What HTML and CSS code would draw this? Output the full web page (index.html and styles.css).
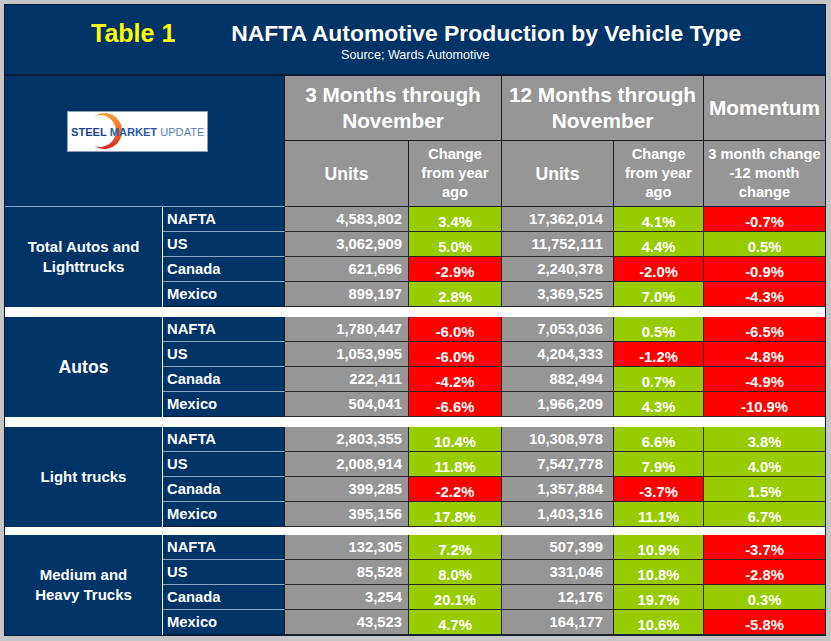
FILE: index.html
```html
<!DOCTYPE html>
<html>
<head>
<meta charset="utf-8">
<link rel="stylesheet" href="styles.css">
</head>
<body>
<div class="frame">
  <div class="titlebar">
    <div class="title-line">
      <span class="table-no">Table 1</span>
      <span class="title">NAFTA Automotive Production by Vehicle Type</span>
    </div>
    <div class="source">Source; Wards Automotive</div>
  </div>

  <div class="head">
    <div class="logo-cell">
      <div class="logo">
        <svg width="139" height="39" viewBox="0 0 139 39">
          <defs>
            <linearGradient id="arcg" x1="0" y1="0" x2="0" y2="1">
              <stop offset="0" stop-color="#f7a23a"/>
              <stop offset="0.5" stop-color="#ef6a22"/>
              <stop offset="1" stop-color="#d8261f"/>
            </linearGradient>
          </defs>
          <path d="M25.7,4.3 A18,18 0 1 1 25.7,33.7 A16,16 0 1 0 25.7,4.3 Z" fill="url(#arcg)"/>
          <text x="3" y="23.5" class="logo-text"><tspan class="l-steel">STEEL</tspan> <tspan class="l-market">MARKET</tspan> <tspan class="l-update">UPDATE</tspan></text>
        </svg>
      </div>
    </div>
    <div class="hd hd1 span2">3 Months through<br>November</div>
    <div class="hd hd1 span2">12 Months through<br>November</div>
    <div class="hd hd1 last">Momentum</div>
    <div class="hd hd2 units">Units</div>
    <div class="hd hd2 small">Change<br>from year<br>ago</div>
    <div class="hd hd2 units">Units</div>
    <div class="hd hd2 small">Change<br>from year<br>ago</div>
    <div class="hd hd2 small last">3 month change<br>-12 month<br>change</div>
  </div>

  <div class="section">
    <div class="cat">Total Autos and<br>Lighttrucks</div>
    <div class="ctry">NAFTA</div><div class="num">4,583,802</div><div class="pct g">3.4%</div><div class="num n2">17,362,014</div><div class="pct g">4.1%</div><div class="pct r last">-0.7%</div>
    <div class="ctry">US</div><div class="num">3,062,909</div><div class="pct g">5.0%</div><div class="num n2">11,752,111</div><div class="pct g">4.4%</div><div class="pct g last">0.5%</div>
    <div class="ctry">Canada</div><div class="num">621,696</div><div class="pct r">-2.9%</div><div class="num n2">2,240,378</div><div class="pct r">-2.0%</div><div class="pct r last">-0.9%</div>
    <div class="ctry end">Mexico</div><div class="num">899,197</div><div class="pct g">2.8%</div><div class="num n2">3,369,525</div><div class="pct g">7.0%</div><div class="pct r last">-4.3%</div>
  </div>
  <div class="gap"></div>

  <div class="section">
    <div class="cat big">Autos</div>
    <div class="ctry">NAFTA</div><div class="num">1,780,447</div><div class="pct r">-6.0%</div><div class="num n2">7,053,036</div><div class="pct g">0.5%</div><div class="pct r last">-6.5%</div>
    <div class="ctry">US</div><div class="num">1,053,995</div><div class="pct r">-6.0%</div><div class="num n2">4,204,333</div><div class="pct r">-1.2%</div><div class="pct r last">-4.8%</div>
    <div class="ctry">Canada</div><div class="num">222,411</div><div class="pct r">-4.2%</div><div class="num n2">882,494</div><div class="pct g">0.7%</div><div class="pct r last">-4.9%</div>
    <div class="ctry end">Mexico</div><div class="num">504,041</div><div class="pct r">-6.6%</div><div class="num n2">1,966,209</div><div class="pct g">4.3%</div><div class="pct r last">-10.9%</div>
  </div>
  <div class="gap"></div>

  <div class="section">
    <div class="cat">Light trucks</div>
    <div class="ctry">NAFTA</div><div class="num">2,803,355</div><div class="pct g">10.4%</div><div class="num n2">10,308,978</div><div class="pct g">6.6%</div><div class="pct g last">3.8%</div>
    <div class="ctry">US</div><div class="num">2,008,914</div><div class="pct g">11.8%</div><div class="num n2">7,547,778</div><div class="pct g">7.9%</div><div class="pct g last">4.0%</div>
    <div class="ctry">Canada</div><div class="num">399,285</div><div class="pct r">-2.2%</div><div class="num n2">1,357,884</div><div class="pct r">-3.7%</div><div class="pct g last">1.5%</div>
    <div class="ctry end">Mexico</div><div class="num">395,156</div><div class="pct g">17.8%</div><div class="num n2">1,403,316</div><div class="pct g">11.1%</div><div class="pct g last">6.7%</div>
  </div>
  <div class="gap short"></div>

  <div class="section">
    <div class="cat">Medium and<br>Heavy Trucks</div>
    <div class="ctry">NAFTA</div><div class="num">132,305</div><div class="pct g">7.2%</div><div class="num n2">507,399</div><div class="pct g">10.9%</div><div class="pct r last">-3.7%</div>
    <div class="ctry">US</div><div class="num">85,528</div><div class="pct g">8.0%</div><div class="num n2">331,046</div><div class="pct g">10.8%</div><div class="pct r last">-2.8%</div>
    <div class="ctry">Canada</div><div class="num">3,254</div><div class="pct g">20.1%</div><div class="num n2">12,176</div><div class="pct g">19.7%</div><div class="pct g last">0.3%</div>
    <div class="ctry end">Mexico</div><div class="num">43,523</div><div class="pct g">4.7%</div><div class="num n2">164,177</div><div class="pct g">10.6%</div><div class="pct r last">-5.8%</div>
  </div>
</div>
</body>
</html>
```

FILE: styles.css
```css
* { box-sizing: border-box; }

body {
  margin: 0;
  background: #c6c6c6;
  font-family: "Liberation Sans", Arial, sans-serif;
  color: #fff;
}

.frame {
  margin: 4px 0 0 4px;
  width: 822px;
  border: 1px solid #0c1b36;
  background: #003366;
}

.titlebar {
  height: 71px;
  border-bottom: 2px solid #0c1b36;
  padding-top: 14px;
}

.title-line {
  display: flex;
  align-items: center;
  height: 28px;
  padding-left: 86px;
}

.table-no {
  color: #ffff00;
  font-weight: bold;
  font-size: 25px;
  line-height: 28px;
}

.title {
  margin-left: 56px;
  font-weight: bold;
  font-size: 22.9px;
  line-height: 28px;
}

.source {
  margin-top: 1px;
  padding-left: 336px;
  font-size: 12.6px;
  line-height: 15px;
}

.head,
.section {
  display: grid;
  grid-template-columns: 158px 122px 124px 93px 112px 90px 121px;
}

.head {
  grid-template-rows: 65px 66px;
}

.logo-cell {
  grid-column: 1 / 3;
  grid-row: 1 / 3;
  border-right: 1px solid #1e1e1e;
  border-bottom: 1px solid #8ea4c0;
  padding: 35px 0 0 62px;
}

.logo {
  width: 141px;
  height: 41px;
  background: #fff;
  border: 1px solid #8d9fb8;
}

.logo svg { display: block; }

.logo-text {
  font-family: "Liberation Sans", Arial, sans-serif;
  font-size: 11.1px;
  font-weight: bold;
}

.l-steel { fill: #1c3f86; }
.l-market { fill: #2b5aa6; }
.l-update { fill: #5a7cb8; font-weight: normal; }

.hd {
  background: #969696;
  border-right: 1px solid #1e1e1e;
  border-bottom: 1px solid #1e1e1e;
  display: flex;
  align-items: center;
  justify-content: center;
  text-align: center;
  font-weight: bold;
}

.hd.last { border-right: none; }

.span2 { grid-column: span 2; }

.hd1 {
  font-size: 20.8px;
  line-height: 26px;
}

.hd2.units {
  font-size: 17.6px;
  line-height: 20px;
}

.hd2.small {
  font-size: 14.67px;
  line-height: 19px;
}

.section {
  grid-template-rows: repeat(4, 25px);
  font-size: 14.8px;
  font-weight: bold;
}

.cat {
  grid-column: 1;
  grid-row: 1 / 5;
  border-right: 1px solid #fff;
  display: flex;
  align-items: center;
  justify-content: center;
  text-align: center;
  font-size: 15px;
  line-height: 20px;
}

.cat.big { font-size: 17.6px; }

.ctry {
  display: flex;
  align-items: center;
  padding-left: 4px;
  border-right: 1px solid #1e1e1e;
  border-bottom: 1px solid #8ea4c0;
  line-height: 17px;
}

.ctry.end { border-bottom: 1px solid #0c1b36; }

.num,
.pct {
  display: flex;
  align-items: center;
  border-right: 1px solid #262626;
  border-bottom: 1px solid #262626;
  line-height: 17px;
}

.num {
  background: #969696;
  justify-content: flex-end;
  padding-right: 6px;
}

.num.n2 { padding-right: 10px; }

.pct {
  justify-content: center;
  padding-top: 6px;
}

.pct.last { border-right: none; }

.g { background: #99cc00; }
.r { background: #ff0000; }

.gap {
  height: 10px;
  background: #fff;
}

.gap.short { height: 8px; }
```
